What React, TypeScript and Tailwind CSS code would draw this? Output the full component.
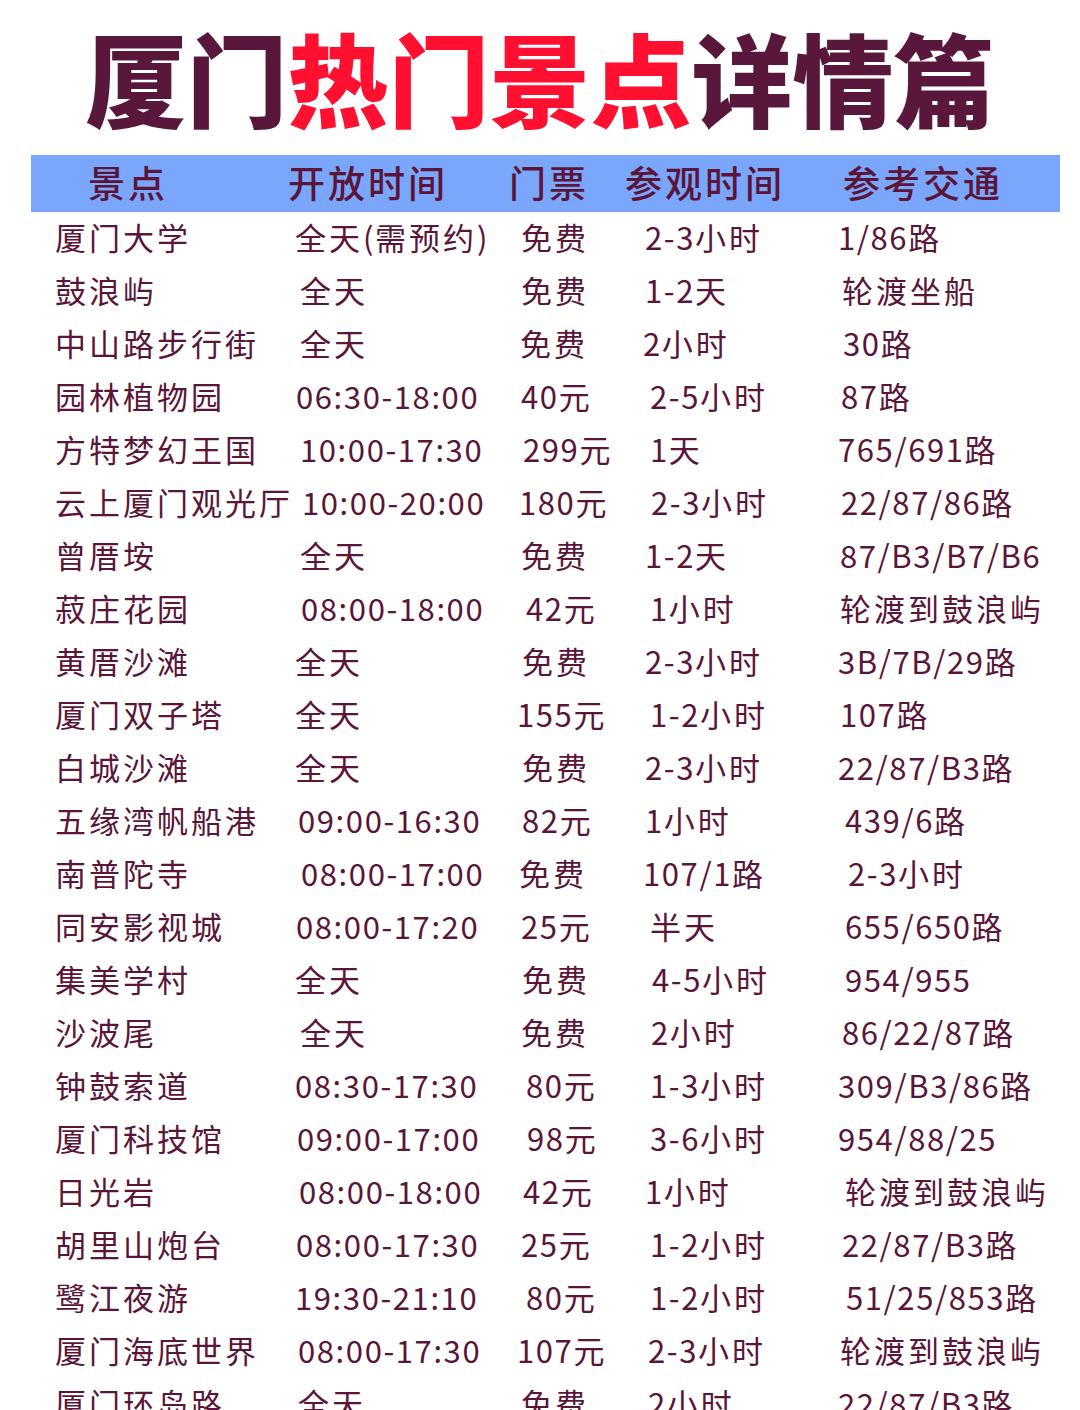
const font = { fontFamily: '"Noto Sans CJK SC", "Noto Sans", sans-serif' };

const pad: Record<number, string> = {
  0: "pl-0",
  1: "pl-[1px]",
  2: "pl-[2px]",
  3: "pl-[3px]",
  4: "pl-[4px]",
  5: "pl-[5px]",
  6: "pl-[6px]",
  7: "pl-[7px]",
  8: "pl-[8px]",
  9: "pl-[9px]",
  10: "pl-[10px]",
};

// each cell: text + offset from its column start
type Cell = [string, number];

const rows: Cell[][] = [
  [["厦门大学", 0], ["全天(需预约)", 0], ["免费", 4], ["2-3小时", 2], ["1/86路", 0]],
  [["鼓浪屿", 0], ["全天", 5], ["免费", 4], ["1-2天", 2], ["轮渡坐船", 4]],
  [["中山路步行街", 0], ["全天", 5], ["免费", 3], ["2小时", 0], ["30路", 5]],
  [["园林植物园", 0], ["06:30-18:00", 1], ["40元", 4], ["2-5小时", 7], ["87路", 3]],
  [["方特梦幻王国", 0], ["10:00-17:30", 5], ["299元", 6], ["1天", 7], ["765/691路", 0]],
  [["云上厦门观光厅", 0], ["10:00-20:00", 7], ["180元", 2], ["2-3小时", 8], ["22/87/86路", 3]],
  [["曾厝垵", 0], ["全天", 5], ["免费", 4], ["1-2天", 2], ["87/B3/B7/B6", 2]],
  [["菽庄花园", 0], ["08:00-18:00", 6], ["42元", 9], ["1小时", 7], ["轮渡到鼓浪屿", 2]],
  [["黄厝沙滩", 0], ["全天", 0], ["免费", 5], ["2-3小时", 2], ["3B/7B/29路", 0]],
  [["厦门双子塔", 0], ["全天", 0], ["155元", 0], ["1-2小时", 7], ["107路", 2]],
  [["白城沙滩", 0], ["全天", 0], ["免费", 5], ["2-3小时", 2], ["22/87/B3路", 0]],
  [["五缘湾帆船港", 0], ["09:00-16:30", 3], ["82元", 5], ["1小时", 2], ["439/6路", 7]],
  [["南普陀寺", 0], ["08:00-17:00", 6], ["免费", 2], ["107/1路", 0], ["2-3小时", 10]],
  [["同安影视城", 0], ["08:00-17:20", 1], ["25元", 4], ["半天", 7], ["655/650路", 7]],
  [["集美学村", 0], ["全天", 0], ["免费", 5], ["4-5小时", 9], ["954/955", 7]],
  [["沙波尾", 0], ["全天", 5], ["免费", 4], ["2小时", 8], ["86/22/87路", 4]],
  [["钟鼓索道", 0], ["08:30-17:30", 0], ["80元", 9], ["1-3小时", 7], ["309/B3/86路", 0]],
  [["厦门科技馆", 0], ["09:00-17:00", 2], ["98元", 10], ["3-6小时", 7], ["954/88/25", 0]],
  [["日光岩", 0], ["08:00-18:00", 4], ["42元", 6], ["1小时", 2], ["轮渡到鼓浪屿", 7]],
  [["胡里山炮台", 0], ["08:00-17:30", 1], ["25元", 4], ["1-2小时", 7], ["22/87/B3路", 4]],
  [["鹭江夜游", 0], ["19:30-21:10", 0], ["80元", 9], ["1-2小时", 7], ["51/25/853路", 8]],
  [["厦门海底世界", 0], ["08:00-17:30", 3], ["107元", 0], ["2-3小时", 5], ["轮渡到鼓浪屿", 2]],
  [["厦门环岛路", 0], ["全天", 3], ["免费", 4], ["2小时", 5], ["22/87/B3路", 0]],
];

// latin/digit runs get tighter spacing than the CJK runs
function Text({ value }: { value: string }) {
  const parts = value.split(/([\u4e00-\u9fff]+)/).filter(Boolean);
  return (
    <>
      {parts.map((p, k) =>
        /[\u4e00-\u9fff]/.test(p) ? (
          <span key={k} className="tracking-[3px]">{p}</span>
        ) : (
          <span key={k} className="tracking-[1.6px]">{p}</span>
        )
      )}
    </>
  );
}

export default function App() {
  return (
    <div className="w-[1080px] h-[1410px] overflow-hidden bg-white" style={font}>
      <div className="h-[155px] flex items-center justify-center pb-[2px]">
        <h1 className="text-[101px] font-black leading-none text-[#58173b]">
          厦门<span className="text-[#ff0f30]">热门景点</span>详情篇
        </h1>
      </div>

      <div className="ml-[31px] w-[1029px] h-[57px] pb-[3px] bg-[#7aa6fc] grid grid-cols-[257px_220px_117px_217px_1fr] items-center text-[37px] font-medium text-[#5a1538] tracking-[3px] leading-none">
        <span className="pl-[57px]">景点</span>
        <span>开放时间</span>
        <span className="pl-[1px]">门票</span>
        <span>参观时间</span>
        <span className="pl-[1px]">参考交通</span>
      </div>

      <div className="pl-[55px] text-[31px] text-[#5a1538] leading-none">
        {rows.map((row, i) => (
          <div
            key={i}
            className="h-[53px] pb-[4px] grid grid-cols-[240px_222px_126px_195px_1fr] items-center"
          >
            {row.map(([text, off], j) => (
              <span key={j} className={`${pad[off]} whitespace-nowrap`}>
                <Text value={text} />
              </span>
            ))}
          </div>
        ))}
      </div>
    </div>
  );
}
